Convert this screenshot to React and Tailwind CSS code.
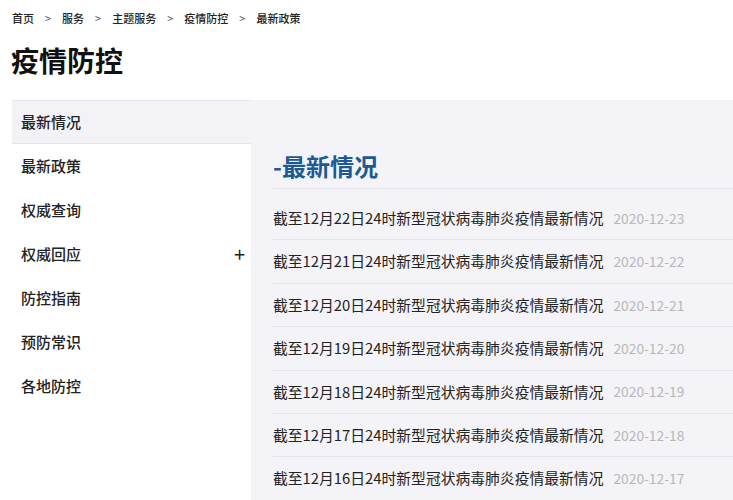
const CRUMBS = ['首页', '服务', '主题服务', '疫情防控', '最新政策'];
const MENU = ['最新情况', '最新政策', '权威查询', '权威回应', '防控指南', '预防常识', '各地防控'];
const NEWS = [
  ['22', '2020-12-23'],
  ['21', '2020-12-22'],
  ['20', '2020-12-21'],
  ['19', '2020-12-20'],
  ['18', '2020-12-19'],
  ['17', '2020-12-18'],
  ['16', '2020-12-17'],
];

export default function App() {
  return (
    <div
      className="w-[733px] h-[500px] overflow-hidden bg-white text-[#222]"
      style={{ fontFamily: '"Noto Sans CJK SC", "Noto Sans", sans-serif' }}
    >
      {/* Breadcrumb */}
      <div className="flex items-center h-[36px] pl-[12px] text-[11px] font-medium text-[#222]">
        {CRUMBS.map((c, i) => (
          <span key={c} className="flex items-center">
            {i > 0 && <span className="mx-[11px] text-[#555] font-normal">&gt;</span>}
            {c}
          </span>
        ))}
      </div>

      {/* Title */}
      <h1 className="pl-[11px] h-[64px] pt-[10px] text-[28px] font-bold text-[#111] leading-[28px]">
        疫情防控
      </h1>

      <div className="flex h-[400px]">
        {/* Sidebar */}
        <div className="w-[251px] pl-[12px] shrink-0">
          {MENU.map((m, i) => (
            <div
              key={m}
              className={`flex items-center justify-between h-[44px] pl-[9px] pr-[6px] text-[15px] font-medium ${
                i === 0 ? 'bg-[#f2f2f7] border-y border-[#e6e6ee]' : ''
              }`}
            >
              <span>{m}</span>
              {m === '权威回应' && <span className="text-[20px] leading-none font-normal">+</span>}
            </div>
          ))}
        </div>

        {/* Content */}
        <div className="flex-1 bg-[#f3f3f8] pl-[22px] pt-[44px]">
          <h2 className="h-[45px] flex items-center text-[24px] font-bold text-[#1b5a95] border-b border-[#e4e4ea]">
            -最新情况
          </h2>
          <div className="pt-[8px]">
            {NEWS.map(([d, date]) => (
              <div key={d} className="flex items-center h-[43.4px] border-b border-[#e4e4ea] whitespace-nowrap">
                <span className="text-[14.8px] text-[#222]">截至12月{d}日24时新型冠状病毒肺炎疫情最新情况</span>
                <span className="ml-[10px] text-[13.8px] text-[#b8b8b8]">{date}</span>
              </div>
            ))}
          </div>
        </div>
      </div>
    </div>
  );
}
